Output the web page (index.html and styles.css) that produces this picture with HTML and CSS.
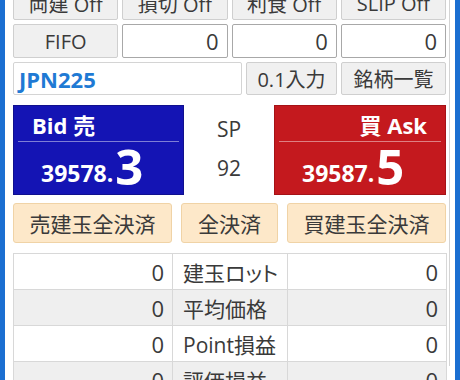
FILE: index.html
```html
<!DOCTYPE html>
<html lang="ja">
<head>
    <meta charset="UTF-8">
    <title>Trade Panel</title>
    <link rel="stylesheet" href="styles.css">
</head>
<body>

<div class="frame">
    <div class="panel">
        <div class="stack">
            <div class="row four">
                <div class="btn">両建 Off</div>
                <div class="btn">損切 Off</div>
                <div class="btn">利食 Off</div>
                <div class="btn">SLIP Off</div>
            </div>
            <div class="row four">
                <div class="btn">FIFO</div>
                <div class="field">0</div>
                <div class="field">0</div>
                <div class="field">0</div>
            </div>
            <div class="row symbol">
                <div class="field sym">JPN225</div>
                <div class="btn">0.1入力</div>
                <div class="btn">銘柄一覧</div>
            </div>

            <div class="prices">
                <div class="quote bid">
                    <div class="quote-head">Bid 売</div>
                    <div class="quote-price"><span class="small">39578.</span><span class="big">3</span></div>
                </div>
                <div class="spread">
                    <div>SP</div>
                    <div>92</div>
                </div>
                <div class="quote ask">
                    <div class="quote-head">買 Ask</div>
                    <div class="quote-price"><span class="small">39587.</span><span class="big">5</span></div>
                </div>
            </div>

            <div class="closers">
                <div class="close-btn">売建玉全決済</div>
                <div class="close-btn">全決済</div>
                <div class="close-btn">買建玉全決済</div>
            </div>

            <table class="stats">
                <tr>
                    <td class="num">0</td>
                    <td class="label">建玉ロット</td>
                    <td class="num">0</td>
                </tr>
                <tr class="alt">
                    <td class="num">0</td>
                    <td class="label">平均価格</td>
                    <td class="num">0</td>
                </tr>
                <tr>
                    <td class="num">0</td>
                    <td class="label">Point損益</td>
                    <td class="num">0</td>
                </tr>
                <tr class="alt">
                    <td class="num">0</td>
                    <td class="label">評価損益</td>
                    <td class="num">0</td>
                </tr>
            </table>
        </div>
    </div>
</div>

</body>
</html>
```

FILE: styles.css
```css
* {
    margin: 0;
    padding: 0;
    box-sizing: border-box;
}

body {
    font-family: "Open Sans", "Noto Sans CJK JP", sans-serif;
    font-feature-settings: "palt";
    color: #3a3a3a;
    background: #fff;
}

.frame {
    width: 460px;
    height: 380px;
    overflow: hidden;
    border-left: 5px solid #1b6fd1;
    border-right: 5px solid #1b6fd1;
    background: #fff;
}

.panel {
    width: 445px;
    height: 100%;
    padding-left: 8px;
    padding-right: 3px;
    border-right: 1px solid #d4d4d4;
}

.stack {
    margin-top: -14px;
    display: flex;
    flex-direction: column;
}

.row {
    display: grid;
    gap: 4px;
    height: 34px;
    margin-bottom: 4px;
}

.row.four {
    grid-template-columns: repeat(4, 1fr);
}

.row.symbol {
    grid-template-columns: 229px 91px 1fr;
    height: 33px;
    margin-bottom: 10px;
}

.btn {
    display: flex;
    align-items: center;
    justify-content: center;
    background: #f0f0f0;
    border: 1px solid #cfcfcf;
    border-radius: 2px;
    font-size: 20px;
    white-space: nowrap;
}

.field {
    display: flex;
    align-items: center;
    justify-content: flex-end;
    padding-right: 8px;
    background: #fff;
    border: 1px solid #a8a8a8;
    border-radius: 2px;
    font-size: 22px;
}

.field.sym {
    justify-content: flex-start;
    padding-left: 5px;
    border-color: #d4d4d4;
    color: #1f7ad4;
    font-weight: bold;
    font-size: 22px;
}

.prices {
    display: grid;
    grid-template-columns: 171px 1fr 172px;
    height: 89px;
    margin-bottom: 9px;
}

.quote {
    display: flex;
    flex-direction: column;
    color: #fff;
    font-weight: bold;
}

.quote.bid {
    background: #1414b4;
    border: 1px solid #10108e;
}

.quote.ask {
    background: #c4191e;
    border: 1px solid #a51216;
}

.quote-head {
    height: 36px;
    margin: 0 4px;
    padding: 0 14px;
    display: flex;
    align-items: center;
    font-size: 22px;
    border-bottom: 1px solid rgba(255, 255, 255, 0.45);
}

.ask .quote-head {
    justify-content: flex-end;
}

.quote-price {
    flex: 1;
    display: flex;
    align-items: flex-end;
    padding-left: 27px;
    padding-bottom: 3px;
    line-height: 1;
}

.quote-price .small {
    font-size: 23px;
    margin-bottom: 6px;
}

.quote-price .big {
    font-size: 49px;
    line-height: 49px;
    margin-left: 2px;
}

.spread {
    display: flex;
    flex-direction: column;
    align-items: center;
    justify-content: space-around;
    padding: 4px 0 8px;
    font-size: 21px;
}

.closers {
    display: grid;
    grid-template-columns: 159px 1fr 159px;
    gap: 9px;
    height: 40px;
    margin-bottom: 10px;
}

.close-btn {
    display: flex;
    align-items: center;
    justify-content: center;
    background: #fde8c9;
    border: 1px solid #f0d3a6;
    border-radius: 3px;
    font-size: 21px;
}

.stats {
    border-collapse: collapse;
    width: 434px;
    table-layout: fixed;
}

.stats td {
    height: 36px;
    border: 1px solid #d8d8d8;
    font-size: 22px;
    padding: 0 8px;
    white-space: nowrap;
}

.stats td.num {
    width: 159px;
    text-align: right;
}

.stats td.label {
    text-align: left;
    padding-left: 10px;
    font-size: 21px;
}

.stats tr.alt td {
    background: #efefef;
}
```
